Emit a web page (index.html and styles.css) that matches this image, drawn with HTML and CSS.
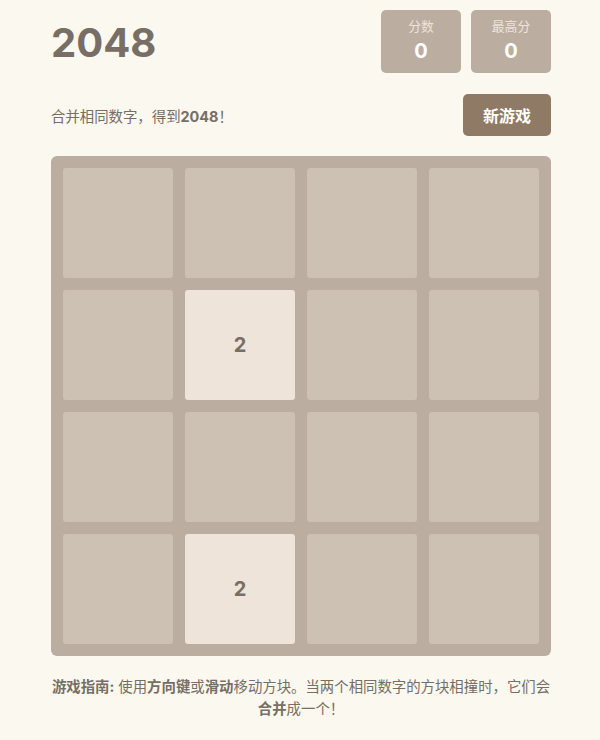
FILE: index.html
```html
<!DOCTYPE html>
<html lang="zh">
    <head>
        <title>2048</title>
        <meta name="viewport" content="width=device-width, initial-scale=1" />
        <meta charset="utf-8" />
        <link rel="stylesheet" href="styles.css">
    </head>
    <body>
        <div class="container">
            <div class="header">
                <h1 class="title">2048</h1>
                <div class="scores">
                    <div class="scoreBox">
                        <div class="scoreLabel">分数</div>
                        <div class="scoreValue">0</div>
                    </div>
                    <div class="scoreBox">
                        <div class="scoreLabel">最高分</div>
                        <div class="scoreValue">0</div>
                    </div>
                </div>
            </div>

            <div class="intro">
                <p class="subtitle">合并相同数字，得到<strong>2048</strong>！</p>
                <button class="newGame">新游戏</button>
            </div>

            <div class="board">
                <div class="cell"></div>
                <div class="cell"></div>
                <div class="cell"></div>
                <div class="cell"></div>

                <div class="cell"></div>
                <div class="cell tile2">2</div>
                <div class="cell"></div>
                <div class="cell"></div>

                <div class="cell"></div>
                <div class="cell"></div>
                <div class="cell"></div>
                <div class="cell"></div>

                <div class="cell"></div>
                <div class="cell tile2">2</div>
                <div class="cell"></div>
                <div class="cell"></div>
            </div>

            <p class="guide"><strong>游戏指南:</strong> 使用<strong>方向键</strong>或<strong>滑动</strong>移动方块。当两个相同数字的方块相撞时，它们会<strong>合并</strong>成一个！</p>
        </div>
    </body>
</html>
```

FILE: styles.css
```css
html {
    font-family: "Inter", "Noto Sans CJK SC", sans-serif;
}
body {
    margin: 0;
    background: #faf8ef;
    color: #776e65;
}
.container {
    width: 500px;
    margin: 0 49px 0 51px;
    padding-top: 10px;
}

.header {
    display: flex;
    justify-content: space-between;
    align-items: center;
}
.title {
    margin: 0;
    padding-top: 2px;
    font-size: 40px;
    font-weight: 700;
    line-height: 1.2;
}
.scores {
    display: flex;
    gap: 10px;
}
.scoreBox {
    width: 80px;
    height: 63px;
    box-sizing: border-box;
    padding-top: 8px;
    background: #bbada0;
    border-radius: 5px;
    text-align: center;
}
.scoreLabel {
    font-size: 12.8px;
    line-height: 18px;
    color: #eee4da;
}
.scoreValue {
    margin-top: 2px;
    font-size: 20px;
    font-weight: 700;
    line-height: 26px;
    color: #fff;
}

.intro {
    display: flex;
    justify-content: space-between;
    align-items: center;
    margin-top: 21px;
}
.subtitle {
    margin: 0;
    font-size: 14.4px;
}
.newGame {
    width: 88px;
    height: 42px;
    border: none;
    border-radius: 5px;
    background: #8f7a66;
    color: #fff;
    font-family: inherit;
    font-size: 16px;
    font-weight: 700;
}

.board {
    display: grid;
    grid-template-columns: repeat(4, 110px);
    grid-template-rows: repeat(4, 110px);
    gap: 12px;
    padding: 12px;
    margin-top: 20px;
    background: #bbada0;
    border-radius: 6px;
}
.cell {
    background: #cdc1b4;
    border-radius: 3px;
    display: flex;
    align-items: center;
    justify-content: center;
    font-size: 20px;
    font-weight: 700;
}
.tile2 {
    background: #eee4da;
    color: #776e65;
}

.guide {
    margin: 20px 0 0;
    font-size: 14.4px;
    line-height: 22px;
    text-align: center;
}
```
